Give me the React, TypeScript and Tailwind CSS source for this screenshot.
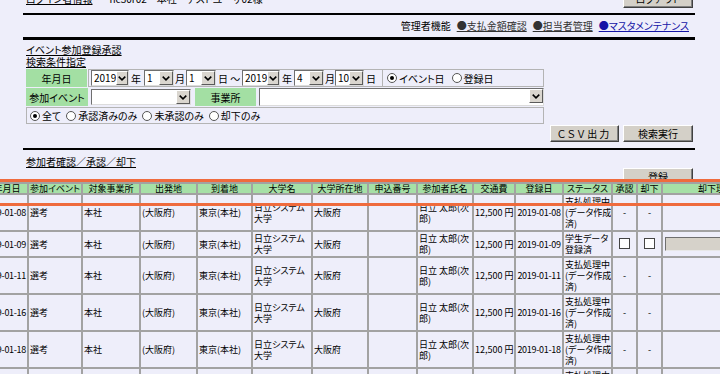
import React from "react";

type Row = {
  date: string;
  status: string[];
  editable?: boolean;
};

const rows: Row[] = [
  { date: "2019-01-08", status: ["支払処理中", "(データ作成", "済)"] },
  { date: "2019-01-09", status: ["学生データ", "登録済"], editable: true },
  { date: "2019-01-11", status: ["支払処理中", "(データ作成", "済)"] },
  { date: "2019-01-16", status: ["支払処理中", "(データ作成", "済)"] },
  { date: "2019-01-18", status: ["支払処理中", "(データ作成", "済)"] },
  { date: "2019-01-21", status: ["支払処理中", "(データ作成", "済)"] },
];

const headers = [
  "開催年月日",
  "参加イベント",
  "対象事業所",
  "出発地",
  "到着地",
  "大学名",
  "大学所在地",
  "申込番号",
  "参加者氏名",
  "交通費",
  "登録日",
  "ステータス",
  "承認",
  "却下",
  "却下理由",
];

function Select({ w, value }: { w: string; value?: string }) {
  return (
    <div
      className={`${w} h-[16px] flex bg-white border border-t-[#6f6f6f] border-l-[#6f6f6f] border-r-[#dcdcdc] border-b-[#dcdcdc]`}
    >
      <span className="flex-1 pl-[2px] leading-[14px] text-[10px] text-black">
        {value}
      </span>
      <span className="w-[14px] h-[14px] bg-[#dad6cf] border border-t-white border-l-white border-r-[#5a5a5a] border-b-[#5a5a5a] flex items-center justify-center">
        <svg width="8" height="5" viewBox="0 0 8 5">
          <path d="M0.7 0.6 L4 3.9 L7.3 0.6" fill="none" stroke="#000" strokeWidth="1.5" />
        </svg>
      </span>
    </div>
  );
}

function Radio({ on }: { on?: boolean }) {
  return (
    <span className="inline-flex w-[10px] h-[10px] rounded-full border border-[#555] bg-white items-center justify-center mr-[2px]">
      {on && <span className="w-[4px] h-[4px] rounded-full bg-black" />}
    </span>
  );
}

function Btn({ children, w, h }: { children: React.ReactNode; w: string; h: string }) {
  return (
    <div
      className={`${w} ${h} bg-[#d4d0c8] border border-t-white border-l-white border-r-[#404040] border-b-[#404040] shadow-[inset_-1px_-1px_0_#808080] flex items-center justify-center text-[10px] leading-none text-black`}
    >
      {children}
    </div>
  );
}

function Check() {
  return (
    <span className="inline-block w-[11px] h-[11px] bg-white border border-[#444]" />
  );
}

const td = "border-2 border-[#a2a2a2] px-[1px] py-[1px] align-middle whitespace-nowrap overflow-hidden";

export default function App() {
  return (
    <div className="relative w-[720px] h-[374px] overflow-hidden bg-[#eeeefa] text-black font-['Noto_Sans_CJK_JP',sans-serif] [font-feature-settings:'palt'] flex flex-col">
      <div className="ml-[23px] w-[672px] flex flex-col text-[10px]">
        {/* login line, cut off at the top */}
        <div className="-mt-[10px] h-[18px] flex items-center justify-between pl-[3px] pr-[2px]">
          <div className="flex items-center leading-[12px]">
            <span className="underline">ログイン者情報</span>
            <span className="ml-[17px]">nc30r02　本社　テストユーザ02様</span>
          </div>
          <Btn w="w-[70px]" h="h-[17px]">ログアウト</Btn>
        </div>
        <div className="mt-[5px] h-[2px] bg-black" />
        <div className="mt-[5px] h-[12px] leading-[12px] flex justify-end gap-[6px] pr-[6px]">
          <span>管理者機能</span>
          <span className="underline text-[#333]">●支払金額確認</span>
          <span className="underline text-[#333]">●担当者管理</span>
          <span className="underline text-[#1414a6]">●マスタメンテナンス</span>
        </div>
        <div className="mt-[5px] h-[3px] bg-black" />

        <div className="mt-[4px] h-[12px] leading-[12px] pl-[3px]">
          <span className="underline">イベント参加登録承認</span>
        </div>
        <div className="h-[12px] leading-[12px] pl-[3px]">
          <span className="underline">検索条件指定</span>
        </div>

        {/* search form */}
        <div className="mt-[1px] ml-[3px] w-[518px] flex flex-col gap-[1px]">
          <div className="h-[18px] flex">
            <div className="w-[61px] bg-[#a3dfa3] flex items-center justify-center">年月日</div>
            <div className="ml-[1px] w-[295px] border border-[#b4b4b4] flex items-center pl-[2px]">
              <Select w="w-[38px]" value="2019" />
              <span className="w-[15px] pl-[2px]">年</span>
              <Select w="w-[30px]" value="1" />
              <span className="w-[12px] pl-[1px]">月</span>
              <Select w="w-[30px]" value="1" />
              <span className="w-[26px] pl-[2px]">日 ～</span>
              <Select w="w-[38px]" value="2019" />
              <span className="w-[14px] pl-[2px]">年</span>
              <Select w="w-[30px]" value="4" />
              <span className="w-[11px] pl-[1px]">月</span>
              <Select w="w-[29px]" value="10" />
              <span className="pl-[2px]">日</span>
            </div>
            <div className="flex-1 border border-l-0 border-[#b4b4b4] flex items-center pl-[4px]">
              <Radio on />
              <span>イベント日</span>
              <span className="ml-[7px]" />
              <Radio />
              <span>登録日</span>
            </div>
          </div>
          <div className="h-[18px] flex">
            <div className="w-[62px] bg-[#a3dfa3] flex items-center justify-center">参加イベント</div>
            <div className="ml-[3px] flex items-center">
              <Select w="w-[100px]" />
            </div>
            <div className="ml-[4px] w-[61px] bg-[#a3dfa3] flex items-center justify-center">事業所</div>
            <div className="ml-[3px] flex-1 flex items-center">
              <Select w="w-[285px] h-[18px]" />
            </div>
          </div>
          <div className="h-[17px] border border-[#b4b4b4] flex items-center pl-[3px]">
            <Radio on />
            <span>全て</span>
            <span className="ml-[5px]" />
            <Radio />
            <span>承認済みのみ</span>
            <span className="ml-[5px]" />
            <Radio />
            <span>未承認のみ</span>
            <span className="ml-[5px]" />
            <Radio />
            <span>却下のみ</span>
          </div>
        </div>

        <div className="mt-[1px] h-[17px] flex justify-end gap-[4px] pr-[2px]">
          <Btn w="w-[69px]" h="h-[17px]">
            <span className="tracking-[2px]">ＣＳＶ出力</span>
          </Btn>
          <Btn w="w-[70px]" h="h-[17px]">検索実行</Btn>
        </div>
        <div className="mt-[6px] h-[2px] bg-black" />
        <div className="mt-[6px] h-[12px] leading-[12px] pl-[3px]">
          <span className="underline">参加者確認／承認／却下</span>
        </div>
        <div className="h-[15px] flex justify-end pr-[2px]">
          <Btn w="w-[70px]" h="h-[17px]">登録</Btn>
        </div>
      </div>

      {/* result table, wider than the window */}
      <table className="-mt-[1px] -ml-[33px] w-[802px] table-fixed border-collapse border-2 border-[#a2a2a2] text-[9px] leading-[11px] shrink-0">
        <colgroup>
          <col className="w-[60px]" />
          <col className="w-[54px]" />
          <col className="w-[58px]" />
          <col className="w-[57px]" />
          <col className="w-[55px]" />
          <col className="w-[60px]" />
          <col className="w-[56px]" />
          <col className="w-[49px]" />
          <col className="w-[56px]" />
          <col className="w-[42px]" />
          <col className="w-[48px]" />
          <col className="w-[49px]" />
          <col className="w-[25px]" />
          <col className="w-[25px]" />
          <col className="w-[108px]" />
        </colgroup>
        <thead>
          <tr className="bg-[#a6e0a6]">
            {headers.map((h) => (
              <th
                key={h}
                className="border-2 border-[#a2a2a2] px-0 font-normal leading-[9px] text-center whitespace-nowrap overflow-hidden"
              >
                {h}
              </th>
            ))}
          </tr>
        </thead>
        <tbody>
          {rows.map((r) => (
            <tr key={r.date} className={r.editable ? "h-[24px]" : ""}>
              <td className={`${td} text-right tracking-[-0.3px]`}>{r.date}</td>
              <td className={td}>選考</td>
              <td className={td}>本社</td>
              <td className={td}>(大阪府)</td>
              <td className={td}>東京(本社)</td>
              <td className={td}>
                日立システム
                <br />
                大学
              </td>
              <td className={td}>大阪府</td>
              <td className={td}></td>
              <td className={td}>
                日立 太郎(次
                <br />
                郎)
              </td>
              <td className={`${td} text-right`}>12,500 円</td>
              <td className={`${td} text-center tracking-[-0.3px]`}>{r.date}</td>
              <td className={td}>
                {r.status.map((s, i) => (
                  <div key={i}>{s}</div>
                ))}
              </td>
              <td className={`${td} text-center`}>{r.editable ? <Check /> : "-"}</td>
              <td className={`${td} text-center`}>{r.editable ? <Check /> : "-"}</td>
              <td className={td}>
                {r.editable && (
                  <div className="ml-[1px] h-[14px] bg-[#d6d2ca] border border-t-[#6f6f6f] border-l-[#6f6f6f] border-r-[#e8e8e8] border-b-[#e8e8e8]" />
                )}
              </td>
            </tr>
          ))}
        </tbody>
      </table>

      {/* highlight drawn over the table header */}
      <div className="absolute left-[-4px] right-[-4px] top-[179px] h-[27px] border-y-[3px] border-[#ef6b3d]" />
    </div>
  );
}
